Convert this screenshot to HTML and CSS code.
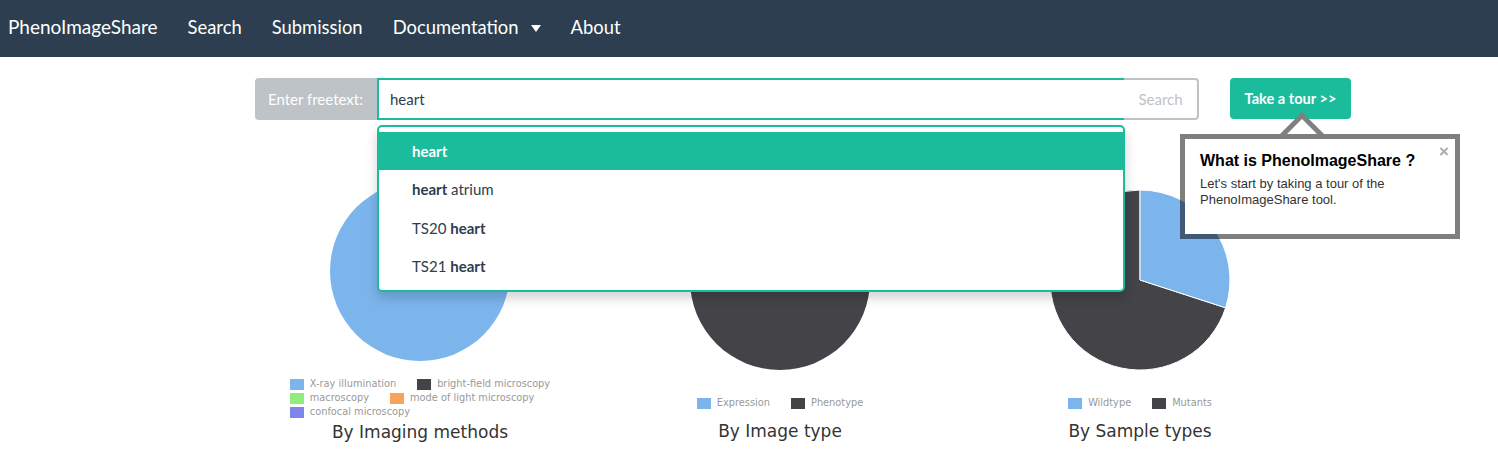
FILE: index.html
```html
<!DOCTYPE html>
<html lang="en">
<head>
<meta charset="utf-8">
<title>PhenoImageShare</title>
<link rel="stylesheet" href="styles.css">
</head>
<body>
<nav class="navbar">
  <a class="brand">PhenoImageShare</a>
  <ul class="nav-links">
    <li>Search</li>
    <li>Submission</li>
    <li>Documentation<span class="caret"></span></li>
    <li>About</li>
  </ul>
</nav>
<main class="main">
  <div class="search-row">
    <div class="search-group">
      <span class="addon">Enter freetext:</span>
      <div class="input-wrap">
        <div class="input">heart</div>
        <ul class="suggestions">
          <li class="active"><b>heart</b></li>
          <li><b>heart</b> atrium</li>
          <li>TS20 <b>heart</b></li>
          <li>TS21 <b>heart</b></li>
        </ul>
      </div>
      <button class="search-btn">Search</button>
    </div>
    <div class="tour-wrap">
      <button class="tour-btn">Take a tour &gt;&gt;</button>
      <div class="popover">
        <span class="popover-close">&times;</span>
        <h3 class="popover-title">What is PhenoImageShare ?</h3>
        <p class="popover-text">Let's start by taking a tour of the PhenoImageShare tool.</p>
      </div>
    </div>
  </div>
  <div class="charts">
    <section class="chart">
      <svg class="pie" viewBox="0 0 180 180">
        <circle cx="90" cy="90" r="90" fill="#7cb5ec"/>
      </svg>
      <div class="legend">
        <div class="legend-row">
          <span class="legend-item"><i class="swatch sw-blue"></i>X-ray illumination</span>
          <span class="legend-item"><i class="swatch sw-dark"></i>bright-field microscopy</span>
        </div>
        <div class="legend-row">
          <span class="legend-item"><i class="swatch sw-green"></i>macroscopy</span>
          <span class="legend-item"><i class="swatch sw-orange"></i>mode of light microscopy</span>
        </div>
        <div class="legend-row">
          <span class="legend-item"><i class="swatch sw-purple"></i>confocal microscopy</span>
        </div>
      </div>
      <h2 class="chart-title">By Imaging methods</h2>
    </section>
    <section class="chart chart--single">
      <svg class="pie" viewBox="0 0 180 180">
        <circle cx="90" cy="90" r="90" fill="#434348"/>
      </svg>
      <div class="legend">
        <div class="legend-row">
          <span class="legend-item"><i class="swatch sw-blue"></i>Expression</span>
          <span class="legend-item"><i class="swatch sw-dark"></i>Phenotype</span>
        </div>
      </div>
      <h2 class="chart-title">By Image type</h2>
    </section>
    <section class="chart chart--single">
      <svg class="pie" viewBox="0 0 180 180">
        <path d="M90 90 L175.6 117.8 A90 90 0 1 1 90 0 Z" fill="#434348" stroke="#fff" stroke-width="1"/>
        <path d="M90 90 L90 0 A90 90 0 0 1 175.6 117.8 Z" fill="#7cb5ec" stroke="#fff" stroke-width="1"/>
      </svg>
      <div class="legend">
        <div class="legend-row">
          <span class="legend-item"><i class="swatch sw-blue"></i>Wildtype</span>
          <span class="legend-item"><i class="swatch sw-dark"></i>Mutants</span>
        </div>
      </div>
      <h2 class="chart-title">By Sample types</h2>
    </section>
  </div>
</main>
</body>
</html>
```
FILE: styles.css
```css
body {
  margin: 0;
  font-family: Lato, "Open Sans", sans-serif;
  background: #fff;
}

.navbar {
  height: 57px;
  box-sizing: border-box;
  padding: 0 0 4px 8px;
  background: #2c3e50;
  display: flex;
  align-items: center;
  gap: 30px;
  color: #fff;
}

.brand {
  font-size: 19px;
}

.nav-links {
  display: flex;
  gap: 30px;
  list-style: none;
  margin: 0;
  padding: 0;
  font-size: 18.4px;
}

.caret {
  display: inline-block;
  width: 0;
  height: 0;
  border-top: 7px solid #fff;
  border-left: 5px solid transparent;
  border-right: 5px solid transparent;
  margin-left: 12px;
  vertical-align: middle;
}

.search-row {
  display: flex;
  align-items: flex-start;
  margin: 21px 0 0 255px;
}

.search-group {
  display: flex;
  width: 944px;
  height: 42px;
}

.addon {
  width: 122px;
  box-sizing: border-box;
  padding-left: 13px;
  background: #bdc3c7;
  color: #fff;
  border-radius: 4px 0 0 4px;
  display: flex;
  align-items: center;
  font-size: 15px;
}

.input-wrap {
  position: relative;
  flex: 1;
}

.input {
  height: 100%;
  box-sizing: border-box;
  border: 2px solid #1abc9c;
  border-right: 0;
  padding: 0 11px;
  display: flex;
  align-items: center;
  font-size: 15px;
  color: #2c3e50;
}

.search-btn {
  width: 75px;
  box-sizing: border-box;
  border: 2px solid #bdc3c7;
  border-left: 0;
  border-radius: 0 4px 4px 0;
  background: #fff;
  color: #bdc3c7;
  font-family: Lato, sans-serif;
  font-size: 15px;
  padding: 0;
}

.suggestions {
  position: absolute;
  top: 47px;
  left: 0;
  right: -1px;
  margin: 0;
  padding: 5px 0;
  list-style: none;
  border: 2px solid #1abc9c;
  border-radius: 5px;
  background: #fff;
  box-shadow: 0 6px 12px rgba(0, 0, 0, 0.175);
  z-index: 10;
}

.suggestions li {
  padding: 9px 33px;
  line-height: 20.25px;
  font-size: 15px;
  color: #2c3e50;
}

.suggestions li.active {
  background: #1abc9c;
  color: #fff;
}

.tour-wrap {
  position: relative;
  margin-left: 31px;
}

.tour-btn {
  width: 121px;
  height: 41px;
  background: #1abc9c;
  color: #fff;
  border: 0;
  border-radius: 4px;
  font-family: Lato, sans-serif;
  font-weight: bold;
  font-size: 14.6px;
  padding: 0;
}

.popover {
  position: absolute;
  left: -50px;
  top: 56px;
  width: 280px;
  height: 105px;
  box-sizing: border-box;
  border: 5px solid rgba(0, 0, 0, 0.5);
  background: #fff;
  background-clip: padding-box;
  padding: 12px 15px 0;
  font-family: "Liberation Sans", Arial, sans-serif;
  color: #333;
  z-index: 20;
}

.popover::before,
.popover::after {
  content: "";
  position: absolute;
  width: 0;
  height: 0;
}

.popover::before {
  left: 95px;
  top: -27px;
  border-left: 22px solid transparent;
  border-right: 22px solid transparent;
  border-bottom: 22px solid #808080;
}

.popover::after {
  left: 102px;
  top: -20px;
  border-left: 15px solid transparent;
  border-right: 15px solid transparent;
  border-bottom: 15px solid #fff;
}

.popover-close {
  position: absolute;
  top: 5px;
  right: 6px;
  font-size: 17px;
  line-height: 16px;
  font-weight: bold;
  color: #aaa;
}

.popover-title {
  margin: 0;
  font-size: 16px;
  line-height: 20px;
  font-weight: bold;
  color: #000;
}

.popover-text {
  margin: 5px 0 0;
  font-size: 13px;
  line-height: 16px;
}

.charts {
  display: grid;
  grid-template-columns: repeat(3, 360px);
  margin: 61px 0 0 240px;
}

.chart {
  display: flex;
  flex-direction: column;
  align-items: center;
}

.pie {
  width: 180px;
  height: 180px;
  display: block;
}

.chart--single .pie {
  margin-top: 9px;
}

.legend {
  margin-top: 16px;
  font-family: "DejaVu Sans", Verdana, sans-serif;
  font-size: 9.8px;
  line-height: 14px;
  color: #999;
}

.chart--single .legend {
  margin-top: 26px;
}

.legend-row {
  display: flex;
  gap: 21px;
}

.legend-item {
  display: flex;
  align-items: center;
  gap: 6px;
  white-space: nowrap;
}

.swatch {
  display: inline-block;
  width: 14px;
  height: 11px;
}

.sw-blue { background: #7cb5ec; }
.sw-dark { background: #434348; }
.sw-green { background: #90ed7d; }
.sw-orange { background: #f7a35c; }
.sw-purple { background: #8085e9; }

.chart-title {
  margin: 3px 0 0;
  font-family: "DejaVu Sans", Verdana, sans-serif;
  font-size: 17px;
  line-height: 20px;
  font-weight: normal;
  color: #333;
}

.chart--single .chart-title {
  margin-top: 11px;
}
```
